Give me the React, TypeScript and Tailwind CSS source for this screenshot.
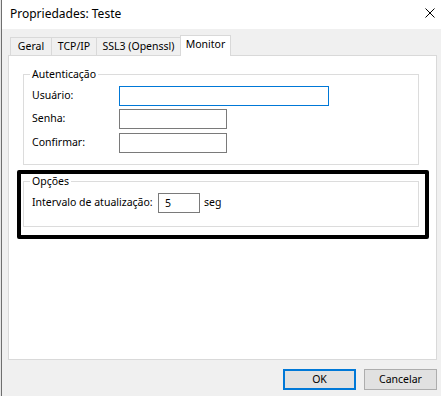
const inputBox =
  "h-[20px] border border-[#7a7a7a] bg-white px-[6px] text-[10.5px] outline-none";

const Tab = ({ label, width, active = false, first = false }: { label: string; width: string; active?: boolean; first?: boolean }) => (
  <div
    className={`${width} ${first ? "" : "-ml-px"} flex items-center justify-center whitespace-nowrap border-x border-t border-[#d9d9d9] ${
      active ? "relative z-10 -mb-px h-[21px] bg-white pb-[3px]" : "h-[18px] bg-[#f0f0f0]"
    }`}
  >
    {label}
  </div>
);

const Field = ({ label, width, focused = false, className = "" }: { label: string; width: string; focused?: boolean; className?: string }) => (
  <div className={`flex h-[20px] items-center ${className}`}>
    <span className="w-[89px] pl-[2px]">{label}</span>
    <input
      readOnly
      defaultValue=""
      className={`${inputBox} ${width} ${focused ? "border-[#0078d7]" : ""}`}
    />
  </div>
);

export default function App() {
  return (
    <div className="flex h-[396px] w-[441px] overflow-hidden bg-[#f0f0f0] font-['Noto_Sans',sans-serif] text-[10.5px] text-black">
      <div className="w-px bg-[#e6e6e6]" />
      <div className="w-px bg-[#6f6f6f]" />

      <div className="flex flex-1 flex-col">
        {/* title bar */}
        <div className="flex h-[29px] shrink-0 items-center justify-between bg-white pl-[8px] pr-[6px]">
          <span className="-mt-[2px] text-[12px]">Propriedades: Teste</span>
          <svg width="10" height="10" viewBox="0 0 10 10" className="-mt-[3px]">
            <path d="M0.5 0.5 L9.5 9.5 M9.5 0.5 L0.5 9.5" stroke="#000" strokeWidth="1" />
          </svg>
        </div>

        {/* tabs + page */}
        <div className="ml-[6px] mt-[6px] w-[429px]">
          <div className="flex h-[20px] items-end pl-[2px]">
            <Tab label="Geral" width="w-[42px]" first />
            <Tab label="TCP/IP" width="w-[46px]" />
            <Tab label="SSL3 (Openssl)" width="w-[85px]" />
            <Tab label="Monitor" width="w-[51px]" active />
          </div>

          <div className="relative h-[305px] border border-[#d9d9d9] bg-white pl-[14px]">
            <fieldset className="mt-[10px] w-[396px] border border-[#dcdcdc] pb-[11px] pl-[6px]">
              <legend className="px-[2px] leading-[16px]">Autenticação</legend>
              <Field label="Usuário:" width="w-[210px]" focused className="mt-[4px]" />
              <Field label="Senha:" width="w-[108px]" className="mt-[3px]" />
              <Field label="Confirmar:" width="w-[108px]" className="mt-[4px]" />
            </fieldset>

            <fieldset className="mt-[8px] w-[396px] border border-[#dcdcdc] pb-[13px] pl-[6px]">
              <legend className="px-[2px] leading-[16px]">Opções</legend>
              <div className="mt-[4px] flex h-[20px] items-center">
                <span className="w-[128px] whitespace-nowrap pl-[2px]">Intervalo de atualização:</span>
                <input readOnly defaultValue="5" className={`${inputBox} w-[42px]`} />
                <span className="ml-[4px]">seg</span>
              </div>
            </fieldset>

            {/* annotation frame drawn over the screenshot */}
            <div className="pointer-events-none absolute left-[8px] top-[114px] h-[69px] w-[412px] rounded-[2px] border-4 border-black" />
          </div>
        </div>

        {/* buttons */}
        <div className="mr-[4px] mt-[9px] flex justify-end gap-[8px]">
          <button className="h-[21px] w-[73px] border-2 border-[#0078d7] bg-[#e1e1e1]">OK</button>
          <button className="h-[21px] w-[73px] border border-[#adadad] bg-[#e1e1e1]">Cancelar</button>
        </div>
      </div>
    </div>
  );
}
